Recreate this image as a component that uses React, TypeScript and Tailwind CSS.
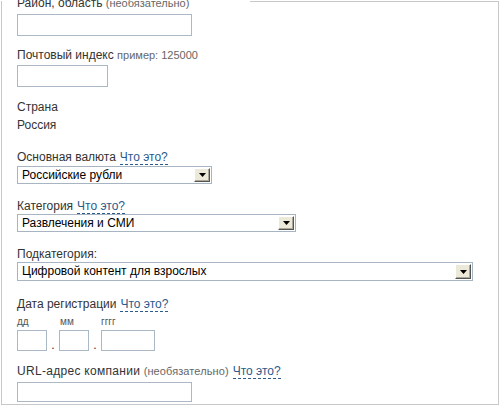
const LINK = "#2b5a8c";

function WhatIsIt() {
  return (
    <span
      className="ml-[4px] inline-block border-b border-dashed leading-[13px] text-[12px]"
      style={{ color: LINK, borderColor: LINK }}
    >
      Что это?
    </span>
  );
}

function Label({ children, className = "" }: { children: React.ReactNode; className?: string }) {
  return <div className={`h-[15px] leading-[15px] text-[12px] text-[#333] ${className}`}>{children}</div>;
}

function TextInput({ w, h = 22, className = "" }: { w: number; h?: number; className?: string }) {
  return (
    <div
      className={`border border-[#abb9c7] bg-white ${className}`}
      style={{ width: w, height: h }}
    />
  );
}

function Select({ w, h, value, className = "" }: { w: number; h: number; value: string; className?: string }) {
  return (
    <div
      className={`flex items-stretch border border-[#a7b4c2] bg-white p-[1px] ${className}`}
      style={{ width: w, height: h }}
    >
      <div className="flex-1 pl-[3px] text-[12px] leading-[14px] text-black">{value}</div>
      <div className="flex w-[16px] items-center justify-center border-t border-l border-t-white border-l-white border-r border-b border-r-[#555] border-b-[#555] bg-[#ece9d8] shadow-[inset_-1px_-1px_0_#aca899]">
        <svg width="7" height="4" viewBox="0 0 7 4">
          <path d="M0 0h7L3.5 4z" fill="#000" />
        </svg>
      </div>
    </div>
  );
}

export default function App() {
  return (
    <div
      className="relative h-[407px] w-[500px] overflow-hidden bg-white"
      style={{ fontFamily: '"Liberation Sans", Arial, sans-serif' }}
    >
      <div className="ml-[1px] mt-[1px] h-[404px] w-[498px] border-x border-t border-b border-[#c8c8c8] pl-[15px]">
        <div className="-mt-[6px] flex flex-col">
          <div className="relative -ml-[15px] w-[248px] bg-white pl-[15px]">
            <Label>
              Район, область <span className="text-[11px] text-[#666]">(необязательно)</span>
            </Label>
          </div>
          <TextInput w={175} className="mt-[3px]" />

          <Label className="mt-[12px]">
            Почтовый индекс <span className="text-[11px] text-[#666]">пример: 125000</span>
          </Label>
          <TextInput w={91} className="mt-[2px]" />

          <Label className="mt-[13px]">Страна</Label>
          <Label className="mt-[3px]">Россия</Label>

          <Label className="mt-[17px]">
            Основная валюта<WhatIsIt />
          </Label>
          <Select w={195} h={18} value="Российские рубли" className="mt-[1px]" />

          <Label className="mt-[15px]">
            Категория<WhatIsIt />
          </Label>
          <Select w={279} h={18} value="Развлечения и СМИ" />

          <Label className="mt-[15px]">Подкатегория:</Label>
          <Select w={456} h={19} value="Цифровой контент для взрослых" />

          <Label className="mt-[16px]">
            Дата регистрации<WhatIsIt />
          </Label>
          <div className="mt-[4px] flex h-[12px] text-[10px] leading-[12px] text-[#555]">
            <span className="w-[43px]">дд</span>
            <span className="w-[41px]">мм</span>
            <span>гггг</span>
          </div>
          <div className="mt-[2px] flex items-end">
            <TextInput w={30} h={21} />
            <span className="w-[12px] text-center text-[12px] leading-[12px] text-[#333]">.</span>
            <TextInput w={30} h={21} />
            <span className="w-[12px] text-center text-[12px] leading-[12px] text-[#333]">.</span>
            <TextInput w={54} h={21} />
          </div>

          <Label className="mt-[13px]">
            <span className="tracking-[0.3px]">URL-адрес компании</span>{" "}
            <span className="text-[11px] tracking-[0.1px] text-[#666]">(необязательно)</span>
            <WhatIsIt />
          </Label>
          <TextInput w={175} h={20} className="mt-[3px]" />
        </div>
      </div>
    </div>
  );
}
